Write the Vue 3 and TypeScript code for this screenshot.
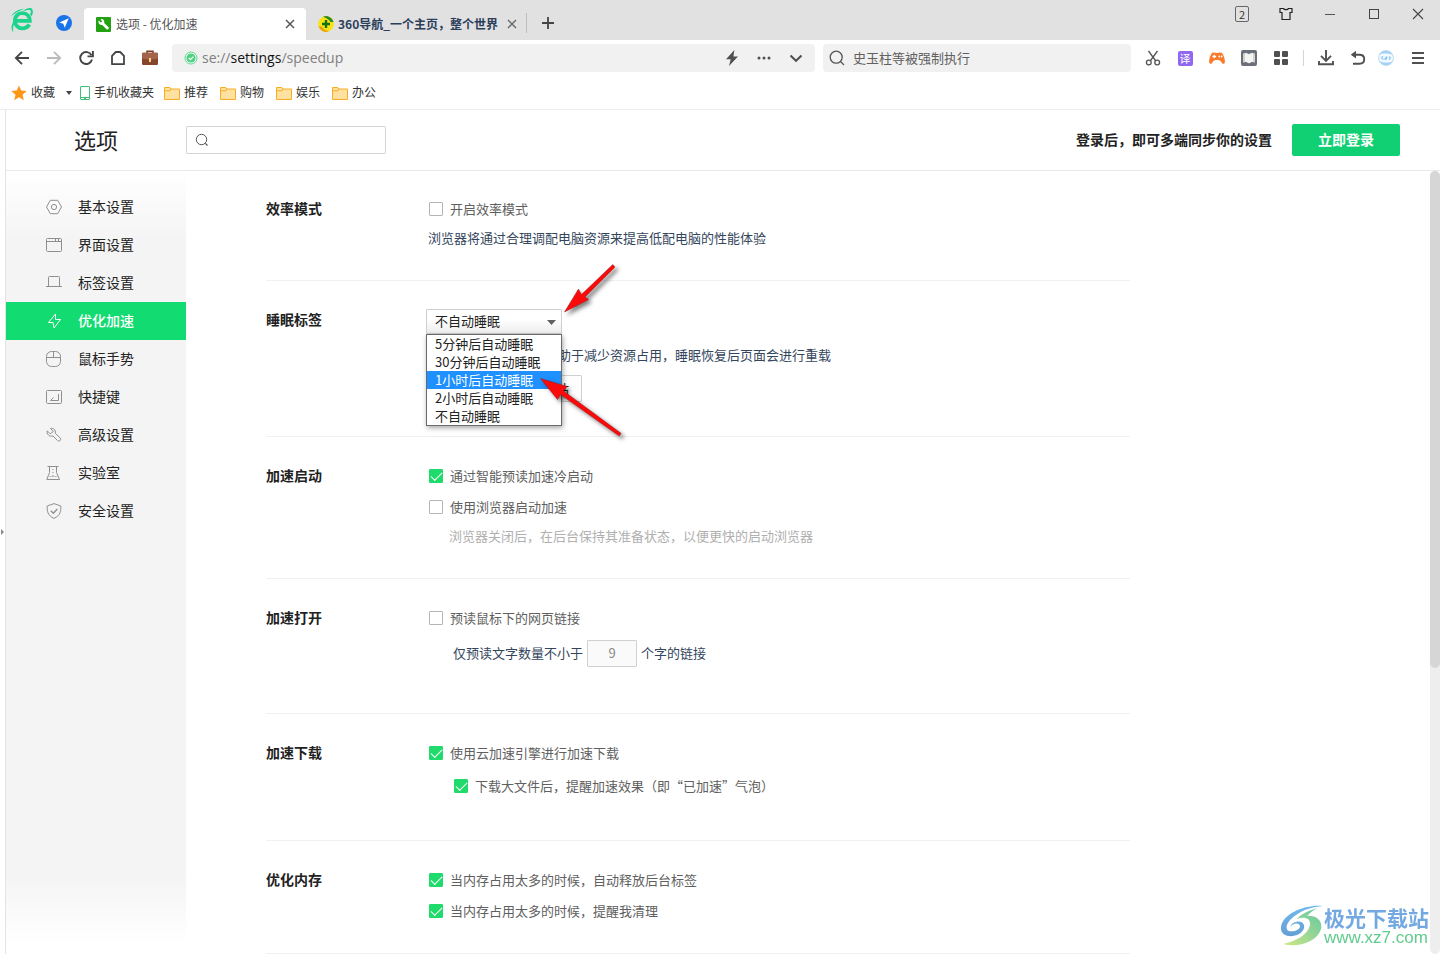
<script setup lang="ts">
import { ref } from 'vue'

interface NavItem {
  id: string
  label: string
}

const navItems: NavItem[] = [
  { id: 'basic', label: '基本设置' },
  { id: 'interface', label: '界面设置' },
  { id: 'tabs', label: '标签设置' },
  { id: 'speedup', label: '优化加速' },
  { id: 'mouse', label: '鼠标手势' },
  { id: 'keys', label: '快捷键' },
  { id: 'advanced', label: '高级设置' },
  { id: 'lab', label: '实验室' },
  { id: 'security', label: '安全设置' },
]
const activeNav = ref('speedup')

const folders: string[] = ['推荐', '购物', '娱乐', '办公']

const sleepOptions: string[] = [
  '5分钟后自动睡眠',
  '30分钟后自动睡眠',
  '1小时后自动睡眠',
  '2小时后自动睡眠',
  '不自动睡眠',
]
const sleepMode = ref('不自动睡眠')
const hovered = ref('1小时后自动睡眠')
const menuOpen = ref(true)

function pick(option: string): void {
  sleepMode.value = option
  menuOpen.value = false
}

const efficiency = ref(false)
const preload = ref(true)
const startBoost = ref(false)
const prefetchLinks = ref(false)
const minChars = ref('9')
const cloudDownload = ref(true)
const bigFileTip = ref(true)
const freeTabs = ref(true)
const cleanTip = ref(true)
const settingQuery = ref('')
const webQuery = ref('')
</script>

<template>
  <div class="browser" lang="zh-CN">
    <header class="tabstrip">
      <svg class="logo" viewBox="0 0 24 26" aria-hidden="true">
        <path d="M5 13.800H19.800C19.800 9 16.500 6.200 12.300 6.200C7.900 6.200 4.800 9.400 4.800 13.600C4.800 18 8 21.300 12.300 21.300C15.300 21.300 17.800 20.200 19.300 17.500" fill="none" stroke="#1bd48c" stroke-width="3.800" />
        <path d="M3.500 25.500C-.500 21.500 2 14.500 7.500 8.500L10 7.500C5 13.500 1.800 19.500 3.500 25.500Z" fill="#1bd48c" />
        <path d="M12.500 4.200C17 .800 21 .300 22.300 2.200C23.500 4.200 22.800 7 21.500 9.200L20 7.500C21 5.500 21.200 3.800 20.200 3.200C18.500 2.500 15.500 3.500 12.500 4.200Z" fill="#1bd48c" />
        <path d="M1 9.500C4 4.800 8.500 2.200 14 1.800C9 4.200 4.500 6.300 1 9.500Z" fill="#1bd48c" />
      </svg>
      <svg class="plane" viewBox="0 0 16 16" aria-hidden="true">
        <circle cx="8" cy="8" r="8" fill="#1a73e8" />
        <path d="M12.800 3.300L3.300 7.600L7.300 8.800L8.700 12.700Z" fill="#fff" />
      </svg>
      <div class="tab active">
        <svg class="favicon" viewBox="0 0 15 15" aria-hidden="true">
          <rect width="15" height="15" rx="1" fill="#23a112" />
          <path d="M2.600 3.600L5 5.600L6.200 4.500L4.500 2.200C6.800 1.600 8.800 3.400 8.200 5.900L12.600 10.300C13.500 11.600 11.700 13.300 10.500 12.300L6.200 7.900C4 8.600 1.900 6.500 2.600 3.600Z" fill="#fff" />
        </svg>
        <span class="tab-title">选项 - 优化加速</span>
        <button class="tab-close" type="button" aria-label="关闭标签">
          <svg viewBox="0 0 10 10"><path d="M1 1L9 9M9 1L1 9" stroke="#555" stroke-width="1.500" /></svg>
        </button>
      </div>
      <div class="tab second">
        <svg class="favicon" viewBox="0 0 16 16" aria-hidden="true">
          <circle cx="8" cy="8" r="7.800" fill="#f8e315" />
          <path d="M5 .700A7.800 7.800 0 0 1 15.600 6L12.500 6C11 3.500 8.500 2 5 .700Z" fill="#2c8a1a" />
          <path d="M11 15.300A7.800 7.800 0 0 1 .6 10.500L3.800 10.500C5.500 13 7.500 14.500 11 15.300Z" fill="#e9a40c" />
          <path d="M8 4V12M4 8H12" stroke="#14730f" stroke-width="2.400" />
        </svg>
        <span class="tab-title">360导航_一个主页，整个世界</span>
        <button class="tab-close" type="button" aria-label="关闭标签">
          <svg viewBox="0 0 10 10"><path d="M1 1L9 9M9 1L1 9" stroke="#666" stroke-width="1.300" /></svg>
        </button>
      </div>
      <button class="new-tab" type="button" aria-label="新建标签">
        <svg viewBox="0 0 12 12"><path d="M6 0V12M0 6H12" stroke="#444" stroke-width="1.800" /></svg>
      </button>
      <div class="window-buttons">
        <button type="button" class="count" aria-label="窗口数"><span>2</span></button>
        <button type="button" aria-label="皮肤">
          <svg width="14" height="14" viewBox="0 0 14 14"><path d="M1 1.500H4.500C5 3 9 3 9.500 1.500H13V5.500H11V12.500H3V5.500H1Z" fill="none" stroke="#222" stroke-width="1.200" /></svg>
        </button>
        <button type="button" aria-label="最小化">
          <svg width="12" height="12" viewBox="0 0 12 12"><path d="M1 6.500H11" stroke="#555" /></svg>
        </button>
        <button type="button" aria-label="最大化">
          <svg width="12" height="12" viewBox="0 0 12 12"><rect x="1.500" y="1.500" width="9" height="9" fill="none" stroke="#444" /></svg>
        </button>
        <button type="button" aria-label="关闭">
          <svg width="12" height="12" viewBox="0 0 12 12"><path d="M1 1L11 11M11 1L1 11" stroke="#444" stroke-width="1.100" /></svg>
        </button>
      </div>
    </header>

    <div class="toolbar">
      <div class="tools">
        <button type="button" aria-label="后退">
          <svg viewBox="0 0 16 16"><path d="M15 8H2M8 1.800L1.800 8L8 14.200" fill="none" stroke="#444" stroke-width="1.800" /></svg>
        </button>
        <button type="button" aria-label="前进">
          <svg viewBox="0 0 16 16"><path d="M1 8H14M8 1.800L14.200 8L8 14.200" fill="none" stroke="#bbb" stroke-width="1.800" /></svg>
        </button>
        <button type="button" aria-label="刷新">
          <svg viewBox="0 0 16 16"><path d="M13.500 5.200A6 6 0 1 0 14 9.600" fill="none" stroke="#444" stroke-width="1.900" /><path d="M14.900 1V6.400H9.500" fill="none" stroke="#444" stroke-width="1.900" /></svg>
        </button>
        <button type="button" aria-label="主页">
          <svg viewBox="0 0 16 16"><path d="M2 14.200V5.800L5.800 2H10.200L14 5.800V14.200Z" fill="none" stroke="#444" stroke-width="1.800" stroke-linejoin="round" /></svg>
        </button>
        <button type="button" aria-label="工具箱">
          <svg viewBox="0 0 16 16">
            <path d="M5 3V1.200H11V3" fill="none" stroke="#7a3f28" stroke-width="1.500" />
            <rect y="2.800" width="16" height="12.200" rx="1.200" fill="#85452d" />
            <path d="M0 4C0 3 .5 2.800 1.200 2.800H14.800C15.500 2.800 16 3 16 4V8.500C11 10 5 10 0 8.500Z" fill="#a4644a" />
            <rect x="7" y="8" width="2" height="4" fill="#f6d77c" />
          </svg>
        </button>
      </div>
      <div class="address">
        <svg class="secure" viewBox="0 0 14 14" aria-hidden="true">
          <circle cx="7" cy="7" r="6" fill="#fff" stroke="#5fd68d" />
          <circle cx="7" cy="7" r="4.600" fill="#4fd281" />
          <path d="M4.800 7L6.500 8.700L9.400 5.600" fill="none" stroke="#fff" stroke-width="1.200" />
        </svg>
        <span class="url">se://<b>settings</b>/speedup</span>
        <button type="button" aria-label="极速模式">
          <svg viewBox="0 0 16 16"><path d="M10.400 0L2 9.300H6.700L5 16L14 6.500H9.400Z" fill="#505050" /></svg>
        </button>
        <button type="button" aria-label="更多">
          <svg viewBox="0 0 16 16"><g fill="#505050"><circle cx="3" cy="8" r="1.500" /><circle cx="8" cy="8" r="1.500" /><circle cx="13" cy="8" r="1.500" /></g></svg>
        </button>
        <button type="button" aria-label="展开">
          <svg viewBox="0 0 16 16"><path d="M2.500 5.500L8 10.800L13.500 5.500" fill="none" stroke="#505050" stroke-width="2" /></svg>
        </button>
      </div>
      <label class="websearch">
        <svg viewBox="0 0 16 16" aria-hidden="true"><circle cx="7.200" cy="7.200" r="6" fill="none" stroke="#555" stroke-width="1.300" /><path d="M11.500 11.500L15 15" stroke="#555" stroke-width="1.300" /></svg>
        <input v-model="webQuery" type="text" placeholder="史玉柱等被强制执行" aria-label="网页搜索" />
      </label>
      <div class="tools extensions">
        <button type="button" aria-label="截图">
          <svg viewBox="0 0 16 16"><path d="M3.500 1L10.800 11M12.500 1L5.200 11" stroke="#555" stroke-width="1.300" /><g fill="none" stroke="#555" stroke-width="1.300"><circle cx="3.800" cy="12.500" r="2.400" /><circle cx="12.200" cy="12.500" r="2.400" /></g></svg>
        </button>
        <button type="button" class="translate" aria-label="翻译"><span>译</span></button>
        <button type="button" aria-label="游戏">
          <svg viewBox="0 0 16 16"><path d="M3 3C5 1.800 6.200 3 8 3S11 1.800 13 3C15 5.500 16.300 10 15.800 12.400C15.200 14.600 13.300 14 12.600 12.500C11.500 10.300 10.500 10 8 10S4.500 10.300 3.400 12.500C2.700 14 .800 14.600.200 12.400C-.300 10 1 5.500 3 3Z" fill="#f97b2c" /><path d="M5.300 4.700V8.300M3.500 6.500H7.100" stroke="#fff" stroke-width="1.300" /><circle cx="10.300" cy="6.500" r=".9" fill="#fff" /><circle cx="12.700" cy="6.500" r=".9" fill="#fff" /></svg>
        </button>
        <button type="button" aria-label="阅读">
          <svg viewBox="0 0 16 16"><rect width="16" height="16" rx="2" fill="#6b6f78" /><path d="M2 3.500L5.500 2.800L8 4L10.500 2.800L14 3.500V12.500L10.500 12L8 13.500L5.500 12L2 12.500Z" fill="#d2d2d0" /><path d="M4 3L8 4.500V13L4 11.500ZM12 3L8 4.500V13L12 11.500Z" fill="#f4f4f2" /></svg>
        </button>
        <button type="button" aria-label="应用">
          <svg viewBox="0 0 16 16"><g fill="#505050"><rect x="1" y="1" width="6" height="6" rx="1" /><rect x="9" y="1" width="6" height="6" rx="1" /><rect x="1" y="9" width="6" height="6" rx="1" /><rect x="9" y="9" width="6" height="6" rx="1" /></g></svg>
        </button>
        <i class="divider" />
        <button type="button" aria-label="下载">
          <svg viewBox="0 0 16 16"><path d="M8 0V10.500M3 5.800L8 10.800L13 5.800M1 11V14.200H15V11" fill="none" stroke="#505050" stroke-width="1.900" /></svg>
        </button>
        <button type="button" aria-label="恢复">
          <svg viewBox="0 0 16 16"><path d="M2 4.700H9.500C12.700 4.700 14.200 6.500 14.200 9.200S12.500 13.700 9.500 13.700H3" fill="none" stroke="#505050" stroke-width="1.900" /><path d="M6 .800V8.600L.800 4.700Z" fill="#505050" /></svg>
        </button>
        <button type="button" class="narrow" aria-label="账户">
          <svg viewBox="0 0 16 16"><circle cx="8" cy="8" r="7.400" fill="#f4faff" stroke="#b8dcf6" /><path d="M1 5A7.500 7.500 0 0 1 14.500 4.800C11 3.500 5 2.500 1 5ZM15 11A7.500 7.500 0 0 1 1.500 11.200C5 12.500 11 13.500 15 11Z" fill="#a4d2f5" /><path d="M5 6L3.500 8L5.500 9.500M6.500 9.500L8.500 6.500M7.500 10L9.500 7M11 6.500L12.500 8L11 10" fill="none" stroke="#8bc7f3" stroke-width="1.200" /></svg>
        </button>
        <button type="button" aria-label="菜单">
          <svg viewBox="0 0 16 16"><path d="M2 3H14M2 8H14M2 13H14" stroke="#505050" stroke-width="1.900" /></svg>
        </button>
      </div>
    </div>

    <nav class="bookmarks" aria-label="收藏栏">
      <a class="fav" href="#fav">
        <svg width="16" height="16" viewBox="0 0 16 16"><path d="M8 .600L10.200 5.600L15.700 6.100L11.500 9.800L12.800 15.200L8 12.300L3.200 15.200L4.500 9.800L.300 6.100L5.800 5.600Z" fill="#ff9515" /></svg>
        <span>收藏</span>
        <svg class="caret" width="6" height="4" viewBox="0 0 6 4"><path d="M0 0H6L3 4Z" fill="#444" /></svg>
      </a>
      <a class="mobile" href="#mobile">
        <svg width="10" height="14" viewBox="0 0 10 14"><rect x=".5" y=".5" width="9" height="13" rx=".5" fill="#fff" stroke="#3dc07a" /><path d="M1 11.500H9" stroke="#3dc07a" /><rect x="4" y="12" width="2" height="1" fill="#3dc07a" /></svg>
        <span>手机收藏夹</span>
      </a>
      <a v-for="f in folders" :key="f" class="folder" :href="'#' + f">
        <svg width="16" height="14" viewBox="0 0 16 14"><path d="M.5 13.500V1.500H5.800L7 3H15.500V13.500Z" fill="#ffe2a2" stroke="#fbab23" /><path d="M.5 4.800H6L7 3" fill="none" stroke="#fbab23" /></svg>
        <span>{{ f }}</span>
      </a>
    </nav>

    <div class="viewport">
      <button class="side-handle" type="button" aria-label="展开侧栏">
        <svg width="3" height="6" viewBox="0 0 3 6"><path d="M0 0L3 3L0 6Z" fill="#888" /></svg>
      </button>
      <div class="page">
        <header class="page-head">
          <h1>选项</h1>
          <label class="setting-search">
            <svg width="14" height="14" viewBox="0 0 14 14" aria-hidden="true"><circle cx="6.500" cy="6.500" r="5.200" fill="none" stroke="#555" /><path d="M10.300 10.300L12.500 12.500" stroke="#555" stroke-width="1.200" /></svg>
            <input v-model="settingQuery" type="text" aria-label="搜索设置" />
          </label>
          <strong>登录后，即可多端同步你的设置</strong>
          <button class="login" type="button">立即登录</button>
        </header>

        <div class="page-body">
          <nav class="sidebar" aria-label="设置分类">
            <a
              v-for="item in navItems"
              :key="item.id"
              :href="'#' + item.id"
              :class="{ current: item.id === activeNav }"
              @click.prevent="activeNav = item.id"
            >
              <svg viewBox="0 0 16 16" fill="none" stroke="currentColor" aria-hidden="true">
                <template v-if="item.id === 'basic'"><path d="M4.300 1.300H11.700L15.500 8L11.700 14.700H4.300L.5 8Z" /><circle cx="8" cy="8" r="2.600" /></template>
                <template v-else-if="item.id === 'interface'"><rect x=".5" y="1.500" width="15" height="13" rx="1" /><path d="M1 4.500H15M9.500 2V4M12.500 2V4" /></template>
                <path v-else-if="item.id === 'tabs'" d="M0 11.500H16M2.500 11V2.500C2.500 1.500 3 1.500 3.500 1.500H12.500C13.300 1.500 13.500 1.700 13.500 2.500V11" />
                <path v-else-if="item.id === 'speedup'" d="M9.500 1L2.500 9.500H7L8 15L14.500 6.500H9.500Z" />
                <template v-else-if="item.id === 'mouse'"><rect x=".5" y=".5" width="14" height="15" rx="5" /><path d="M.500 6.500H14.500M7.500 1V6.500" /></template>
                <template v-else-if="item.id === 'keys'"><rect x=".5" y="1.500" width="15" height="13" rx="1" /><path d="M12.500 5V11.500H4.500M7.500 8.500L4.500 11.500" /></template>
                <path v-else-if="item.id === 'advanced'" d="M4.500 1.500C7.500.500 10 3 9.200 6.200L14.500 11.300C15.300 13.500 13.200 15 11.500 13.500L7 9C3.500 10 .2 7 1.200 3.800L4.200 6.800L7.300 4.500Z" />
                <template v-else-if="item.id === 'lab'"><path d="M1.500 1.500H12.500M3.500 2V7.500L.8 14.500H13.500L10.500 7.500V2" /><path d="M7 4V11" stroke-dasharray="1 2" /><path d="M3.500 11.500H11" stroke-dasharray="1 1" /></template>
                <template v-else><path d="M8 .600L14.800 3C15 8 14.500 12.500 8 15.400C1.500 12.500 1 8 1.200 3Z" /><path d="M4.800 7.800L7.300 10.300L11.300 6" stroke-width="1.300" /></template>
              </svg>
              <span>{{ item.label }}</span>
            </a>
          </nav>

          <main class="content">
            <section>
              <h2>效率模式</h2>
              <div class="fields">
                <label class="check"><input v-model="efficiency" type="checkbox" /><span>开启效率模式</span></label>
                <p class="desc tight">浏览器将通过合理调配电脑资源来提高低配电脑的性能体验</p>
              </div>
            </section>

            <section class="sleep">
              <h2>睡眠标签</h2>
              <div class="fields">
                <div class="dropdown">
                  <select v-model="sleepMode" aria-label="睡眠标签" @mousedown.prevent="menuOpen = !menuOpen">
                    <option v-for="o in sleepOptions" :key="o">{{ o }}</option>
                  </select>
                  <svg class="arrow" width="9" height="5" viewBox="0 0 9 5" aria-hidden="true"><path d="M0 0H9L4.500 5Z" fill="#606060" /></svg>
                  <ul v-if="menuOpen" class="menu" role="listbox" aria-label="睡眠时间">
                    <li
                      v-for="o in sleepOptions"
                      :key="o"
                      role="option"
                      :aria-selected="o === hovered"
                      :class="{ hovered: o === hovered }"
                      @mouseenter="hovered = o"
                      @click="pick(o)"
                    >{{ o }}</li>
                  </ul>
                  <svg class="pointers" width="110" height="190" viewBox="530 255 110 190" aria-hidden="true">
                    <g fill="#fb0a0c" stroke="#a01515" stroke-width=".5" stroke-linejoin="round">
                      <path d="M564.500 312L578.500 289L581.500 294.500L612.800 264.500L615 267L585 297L588.500 299.500Z" />
                      <path d="M540.500 378.500L567 386.500L563.500 391L621 433.300L619.200 436L560.600 394.500L557.500 399.500Z" />
                    </g>
                  </svg>
                </div>
                <p class="desc">标签页自动睡眠后，有助于减少资源占用，睡眠恢复后页面会进行重载</p>
                <button class="sites" type="button">添加不自动睡眠的网站</button>
              </div>
            </section>

            <section>
              <h2>加速启动</h2>
              <div class="fields">
                <label class="check"><input v-model="preload" type="checkbox" /><span>通过智能预读加速冷启动</span></label>
                <label class="check next"><input v-model="startBoost" type="checkbox" /><span>使用浏览器启动加速</span></label>
                <p class="desc tight hint">浏览器关闭后，在后台保持其准备状态，以便更快的启动浏览器</p>
              </div>
            </section>

            <section class="open">
              <h2>加速打开</h2>
              <div class="fields">
                <label class="check"><input v-model="prefetchLinks" type="checkbox" /><span>预读鼠标下的网页链接</span></label>
                <div class="amount">
                  <label for="min-chars">仅预读文字数量不小于</label>
                  <input id="min-chars" v-model="minChars" type="text" />
                  <span>个字的链接</span>
                </div>
              </div>
            </section>

            <section class="download">
              <h2>加速下载</h2>
              <div class="fields">
                <label class="check"><input v-model="cloudDownload" type="checkbox" /><span>使用云加速引擎进行加速下载</span></label>
                <label class="check nested"><input v-model="bigFileTip" type="checkbox" /><span>下载大文件后，提醒加速效果（即“已加速”气泡）</span></label>
              </div>
            </section>

            <section>
              <h2>优化内存</h2>
              <div class="fields">
                <label class="check"><input v-model="freeTabs" type="checkbox" /><span>当内存占用太多的时候，自动释放后台标签</span></label>
                <label class="check next"><input v-model="cleanTip" type="checkbox" /><span>当内存占用太多的时候，提醒我清理</span></label>
              </div>
            </section>
          </main>

          <div class="scrollbar" aria-hidden="true"><div class="thumb" /></div>
        </div>
      </div>

      <div class="watermark">
        <svg width="44" height="42" viewBox="0 0 44 42" aria-hidden="true">
          <defs>
            <linearGradient id="swirl" x1="0" y1="0" x2="0" y2="1">
              <stop offset="0" stop-color="#58aee8" />
              <stop offset="1" stop-color="#4a8fd0" />
            </linearGradient>
            <linearGradient id="leaf" x1="1" y1="0" x2="0" y2="1">
              <stop offset="0" stop-color="#45bd94" />
              <stop offset="1" stop-color="#c9e370" />
            </linearGradient>
          </defs>
          <path d="M43 1C26 -1 3 8 1 22C0 30 9 33 17 30C22 28 25 24 24 20C22 14 12 16 10 22C13 18 19 17 20 21C20 25 14 27 9 26C4 24 7 16 16 10C24 4 33 2 43 1Z" fill="url(#swirl)" />
          <path d="M37 3C27 6 20 10 17 14C24 11 31 13 30 20C28 30 16 36 3 39C18 43 37 37 41 24C43 15 35 10 27 11C30 8 33 5 37 3Z" fill="url(#leaf)" />
        </svg>
        <div class="mark-text"><b>极光下载站</b><span>www.xz7.com</span></div>
      </div>
    </div>
  </div>
</template>

<style>
body {
  margin: 0;
}
</style>

<style scoped>
.browser,
.browser * {
  box-sizing: border-box;
}
.browser {
  display: flex;
  flex-direction: column;
  height: 100vh;
  overflow: hidden;
  background: #fff;
  color: #333;
  font-family: "Noto Sans CJK SC", "Open Sans", sans-serif;
  font-size: 13px;
}
button,
input,
select {
  margin: 0;
  padding: 0;
  border: 0;
  background: none;
  font: inherit;
  color: inherit;
  outline: 0;
}
h1,
h2,
p,
ul {
  margin: 0;
  padding: 0;
}
a {
  color: inherit;
  text-decoration: none;
}
svg {
  display: block;
  flex: none;
}

/* tab strip */
.tabstrip {
  display: flex;
  align-items: flex-end;
  flex: none;
  height: 40px;
  padding-left: 10px;
  background: #e1e1e1;
}
.logo {
  width: 24px;
  height: 26px;
  margin: 0 22px 7px 0;
}
.plane {
  width: 16px;
  height: 16px;
  margin: 0 12px 9px 0;
}
.tab {
  display: flex;
  align-items: center;
  height: 32px;
  font-size: 12px;
}
.tab.active {
  width: 222px;
  padding: 0 11px 0 12px;
  border-radius: 4px 4px 0 0;
  background: #fff;
  color: #555;
}
.tab.second {
  position: relative;
  padding: 0 10px 0 12px;
  color: #2c3e5c;
  font-weight: 700;
  white-space: nowrap;
}
.tab.second::after {
  content: "";
  position: absolute;
  right: 0;
  top: 5px;
  height: 20px;
  border-right: 1px solid #bdbdbd;
}
.favicon {
  width: 15px;
  height: 15px;
  margin-right: 5px;
}
.tab.second .favicon {
  width: 16px;
  height: 16px;
  margin-right: 4px;
}
.tab-title {
  flex: 1;
  padding-bottom: 2px;
}
.tab-close {
  display: grid;
  place-items: center;
  width: 10px;
  height: 16px;
}
.tab.second .tab-close {
  margin-left: 9px;
}
.tab-close svg {
  width: 10px;
  height: 10px;
}
.new-tab {
  display: grid;
  place-items: center;
  width: 42px;
  height: 34px;
}
.new-tab svg {
  width: 12px;
  height: 12px;
}
.window-buttons {
  display: flex;
  align-self: flex-start;
  margin-left: auto;
}
.window-buttons button {
  display: grid;
  place-items: center;
  width: 44px;
  height: 28px;
}
.count span {
  width: 14px;
  height: 16px;
  border: 1px solid #666;
  border-radius: 2px;
  font-size: 11px;
  line-height: 14px;
  text-align: center;
}

/* toolbar */
.toolbar {
  display: flex;
  align-items: center;
  flex: none;
  height: 36px;
  padding: 0 6px;
}
.tools {
  display: flex;
  align-items: center;
}
.tools button,
.address button {
  display: grid;
  place-items: center;
  width: 32px;
  height: 28px;
}
.tools svg,
.address button svg {
  width: 16px;
  height: 16px;
}
.tools .narrow {
  width: 24px;
  margin-right: 4px;
}
.extensions {
  margin-left: 6px;
}
.translate span {
  width: 15px;
  height: 15px;
  border-radius: 2px;
  background: #9068f0;
  color: #fff;
  font-size: 11px;
  line-height: 15px;
}
.divider {
  width: 1px;
  height: 16px;
  margin: 0 6px;
  background: #d5d5d5;
}
.address {
  display: flex;
  align-items: center;
  flex: 1;
  height: 28px;
  margin: 0 8px 0 6px;
  padding: 0 3px 0 12px;
  border-radius: 4px;
  background: #f1f1f1;
}
.secure {
  width: 14px;
  height: 14px;
  margin-right: 4px;
}
.url {
  flex: 1;
  color: #808080;
  font-family: "Open Sans", "Noto Sans CJK SC", sans-serif;
  font-size: 14px;
  line-height: 28px;
}
.url b {
  color: #111;
  font-weight: 400;
}
.websearch {
  display: flex;
  align-items: center;
  gap: 8px;
  width: 308px;
  height: 28px;
  padding: 0 6px;
  border-radius: 4px;
  background: #f1f1f1;
}
.websearch svg {
  width: 16px;
  height: 16px;
}
.websearch input {
  flex: 1;
  min-width: 0;
  height: 22px;
  padding-bottom: 2px;
}
.websearch input::placeholder {
  color: #606060;
  opacity: 1;
}

/* bookmarks */
.bookmarks {
  display: flex;
  align-items: center;
  flex: none;
  height: 34px;
  padding-left: 11px;
  border-bottom: 1px solid #ececec;
  font-size: 12px;
}
.bookmarks a {
  display: flex;
  align-items: center;
  gap: 4px;
  white-space: nowrap;
}
.bookmarks span {
  padding-bottom: 2px;
}
.bookmarks .fav {
  margin-right: 8px;
}
.bookmarks .mobile {
  margin-right: 10px;
}
.caret {
  margin-left: 7px;
}
.bookmarks .folder {
  margin-right: 12px;
}

/* page frame */
.viewport {
  display: flex;
  flex: 1;
  min-height: 0;
  position: relative;
}
.side-handle {
  display: grid;
  place-items: center;
  width: 5px;
}
.page {
  display: flex;
  flex-direction: column;
  flex: 1;
  min-width: 0;
  border-left: 1px solid #e4e4e4;
}
.page-head {
  display: flex;
  align-items: center;
  flex: none;
  height: 61px;
  padding-right: 40px;
  border-bottom: 1px solid #e8e8e8;
  color: #222;
}
h1 {
  width: 180px;
  padding-bottom: 2px;
  font-size: 22px;
  font-weight: 400;
  line-height: 32px;
  text-align: center;
}
.setting-search {
  display: flex;
  align-items: center;
  gap: 6px;
  width: 200px;
  height: 28px;
  padding: 0 8px;
  border: 1px solid #d6d6d6;
  border-radius: 1px;
}
.setting-search input {
  flex: 1;
  min-width: 0;
}
.page-head strong {
  margin-left: auto;
  padding-bottom: 2px;
  font-size: 14px;
  font-weight: 700;
}
.login {
  width: 108px;
  height: 32px;
  margin-left: 20px;
  padding-bottom: 2px;
  border-radius: 2px;
  background: #11cf73;
  color: #fff;
  font-size: 14px;
  font-weight: 700;
}
.page-body {
  display: flex;
  flex: 1;
  min-height: 0;
}
.sidebar {
  flex: none;
  width: 180px;
  padding-top: 17px;
  background: linear-gradient(#fff, #f4f4f4 70px, #f4f4f4 calc(100% - 80px), #fff calc(100% - 10px));
}
.sidebar a {
  display: flex;
  align-items: center;
  gap: 16px;
  height: 38px;
  padding-left: 40px;
  color: #222;
  font-size: 14px;
}
.sidebar span {
  padding-bottom: 2px;
}
.sidebar svg {
  width: 16px;
  height: 16px;
  color: #8f8f8f;
}
.sidebar .current {
  background: #12dc71;
  color: #fff;
  font-weight: 500;
}
.sidebar .current svg {
  color: #fff;
}

/* settings */
.content {
  flex: 1;
  min-width: 0;
  padding: 0 80px;
}
.content section {
  display: flex;
  max-width: 864px;
  padding: 28px 0 31px;
  border-bottom: 1px solid #f0f0f0;
}
.content section:first-child {
  padding-top: 27px;
}
.content .sleep {
  padding-bottom: 34px;
}
.content .open {
  padding-bottom: 46px;
}
.content .download {
  padding-bottom: 43px;
}
h2 {
  flex: none;
  width: 160px;
  color: #222;
  font-size: 14px;
  font-weight: 700;
  line-height: 20px;
}
.fields {
  display: flex;
  flex-direction: column;
  align-items: flex-start;
  line-height: 22px;
}
.check {
  display: flex;
  align-items: center;
  gap: 7px;
  margin-left: 3px;
  color: #606060;
}
.check.next {
  margin-top: 9px;
}
.check.nested {
  margin: 11px 0 0 28px;
}
.check input {
  display: grid;
  place-items: center;
  width: 14px;
  height: 14px;
  border: 1px solid #b5b5b5;
  border-radius: 1px;
  background: #fff;
  appearance: none;
}
.check input:checked {
  border-color: #1fdb6b;
  background: #1fdb6b;
}
.check input:checked::before {
  content: "";
  width: 10px;
  height: 5px;
  margin-bottom: 3px;
  border: solid #fff;
  border-width: 0 0 1px 1px;
  transform: rotate(-45deg);
}
.desc {
  margin: 10px 0 0 2px;
  color: #34465c;
}
.desc.tight {
  margin-top: 7px;
}
.desc.hint {
  margin-left: 23px;
  color: #b0b0b0;
}
.dropdown {
  position: relative;
  width: 136px;
}
.dropdown select {
  display: block;
  width: 100%;
  height: 25px;
  padding: 0 8px 2px;
  border: 1px solid #cfcfcf;
  border-radius: 1px;
  background: linear-gradient(#fff 40%, #ededed);
  color: #222;
  line-height: 21px;
  appearance: none;
}
.dropdown .arrow {
  position: absolute;
  top: 11px;
  right: 6px;
}
.menu {
  position: absolute;
  z-index: 1;
  top: 25px;
  left: 0;
  width: 100%;
  border: 1px solid #6b6b6b;
  background: #fff;
  box-shadow: 1px 2px 5px rgba(0, 0, 0, 0.35);
  color: #222;
  line-height: 18px;
  list-style: none;
  white-space: nowrap;
}
.menu li {
  height: 18px;
  padding-left: 8px;
}
.menu .hovered {
  background: #1e90ff;
  color: #fff;
}
.pointers {
  position: absolute;
  z-index: 2;
  top: -54px;
  left: 104px;
  filter: drop-shadow(3px 3px 2px rgba(0, 0, 0, 0.5));
  pointer-events: none;
}
.sites {
  height: 27px;
  margin-top: 9px;
  padding: 0 12px;
  border: 1px solid #d0d0d0;
  border-radius: 1px;
  background: #fdfdfd;
  color: #222;
}
.amount {
  display: flex;
  align-items: center;
  gap: 4px;
  margin: 11px 0 0 27px;
  color: #34465c;
}
.amount label,
.amount span {
  padding-bottom: 2px;
}
.amount input {
  width: 50px;
  height: 27px;
  padding-bottom: 2px;
  border: 1px solid #d0d0d0;
  border-radius: 1px;
  background: #fafafa;
  color: #888;
  text-align: center;
}
.scrollbar {
  flex: none;
  width: 10px;
  border-radius: 5px;
  background: #eee;
}
.thumb {
  height: 63.5%;
  border-radius: 5px;
  background: #d6d6d6;
}

/* site mark over the page corner */
.watermark {
  display: flex;
  position: absolute;
  right: 11px;
  bottom: 7px;
  align-items: center;
  opacity: 0.85;
  pointer-events: none;
}
.mark-text {
  display: flex;
  flex-direction: column;
}
.mark-text b {
  color: #5b9bdb;
  font-size: 21px;
  line-height: 24px;
}
.mark-text span {
  color: #45c27a;
  font-family: "Liberation Sans", sans-serif;
  font-size: 17px;
  line-height: 18px;
}
</style>
